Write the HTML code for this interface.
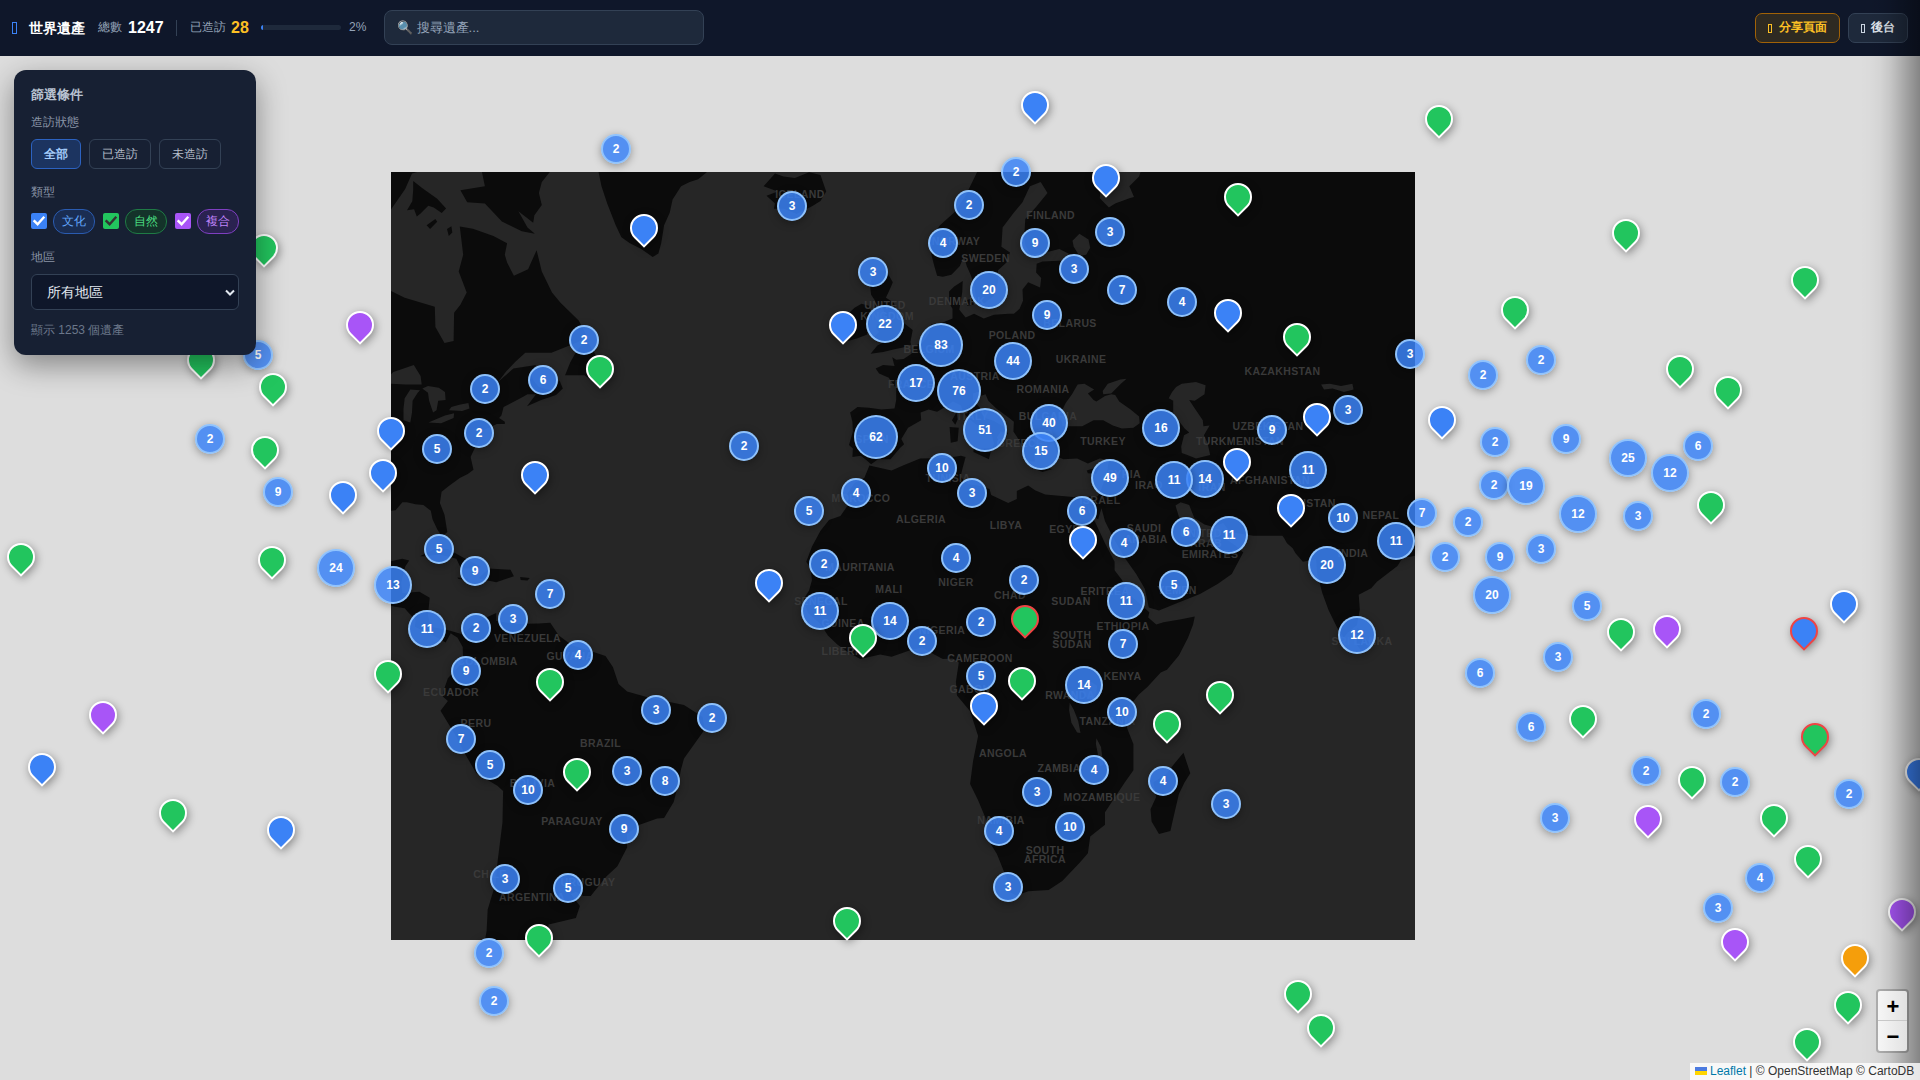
<!DOCTYPE html><html><head><meta charset="utf-8"><style>
*{box-sizing:border-box;margin:0;padding:0}
html,body{width:1920px;height:1080px;overflow:hidden;background:#dddddd;font-family:"Liberation Sans",sans-serif}
#tiles{position:absolute;left:391px;top:172px;width:1024px;height:768px;background:#262626;overflow:hidden}
#tiles svg{position:absolute;left:0;top:0}
.lb{position:absolute;transform:translate(-50%,-50%);font-size:10.5px;font-weight:bold;letter-spacing:.4px;color:#3a3a3a;white-space:nowrap;line-height:1}
.cl{position:absolute;border-radius:50%;background:rgba(59,130,246,.85);border:2.5px solid rgba(147,197,253,.95);color:#fff;font-weight:bold;font-size:12px;display:flex;align-items:center;justify-content:center;box-shadow:0 2px 8px rgba(0,0,0,.35)}
.pin{position:absolute;width:28px;height:28px;border-radius:50% 50% 50% 0;transform:rotate(-45deg);border:2.5px solid #fff;box-shadow:-.7px 2.8px 8px rgba(0,0,0,.38)}
#hdr{position:absolute;left:0;top:0;width:1920px;height:56px;background:#0f172a}
#hdr .t{position:absolute;white-space:nowrap;line-height:1}
#shade{position:absolute;right:0;top:0;width:60px;height:1080px;background:linear-gradient(to right,rgba(0,0,0,0) 0%,rgba(0,0,0,.01) 16.7%,rgba(0,0,0,.04) 33.3%,rgba(0,0,0,.10) 50%,rgba(0,0,0,.20) 66.7%,rgba(0,0,0,.30) 83.3%,rgba(0,0,0,.40) 100%)}
#panel{position:absolute;left:14px;top:70px;width:242px;height:284.5px;background:#172033;border-radius:12px;box-shadow:0 10px 30px rgba(0,0,0,.4)}
#panel .t{position:absolute;white-space:nowrap;line-height:1}
.btn{position:absolute;border:1px solid #334155;border-radius:6px;color:#cbd5e1;font-size:13px;display:flex;align-items:center;justify-content:center}
.pill{position:absolute;border-radius:12px;font-size:12px;font-weight:normal;display:flex;align-items:center;justify-content:center}
.cb{position:absolute;width:16px;height:16px;border-radius:2px}
#zoom{position:absolute;left:1876px;top:989px;width:33px;height:63.5px;background:linear-gradient(to right,#f6f6f6,#e2e2e2);border:2px solid rgba(0,0,0,.2);border-radius:4px;background-clip:padding-box}
#attr{position:absolute;left:1690px;top:1063px;width:230px;height:17px;background:rgba(255,255,255,.8);font-size:12px;color:#333;line-height:17px;padding-left:5px;white-space:nowrap}
</style></head><body><div id="tiles"><svg width="1024" height="768" viewBox="0 0 1024 768"><path fill="#0b0b0b" d="M-170.7 -53.7L34.1 -53.7L48.4 -37.4L48.4 -7.0L21.0 1.6L14.2 16.9L-4.0 43.2L-11.4 49.4L-22.8 70.0L-23.9 96.2L-14.2 112.3L13.7 125.7L43.8 134.8L44.4 155.1L53.5 170.9L62.6 169.1L63.1 140.7L69.4 132.8L75.7 120.6L67.7 99.4L72.2 82.7L68.8 54.4L81.9 56.8L102.4 64.1L116.1 71.2L113.8 82.7L116.1 90.6L122.9 103.8L137.1 97.2L145.6 78.2L150.8 99.4L161.0 120.6L169.5 130.8L187.7 148.5L195.1 162.6L187.2 170.0L160.4 180.8L134.3 180.8L124.6 189.6L115.5 199.1L107.0 210.0L122.3 196.5L145.1 193.1L139.4 199.9L142.2 208.3L147.9 215.0L162.1 219.1L168.4 208.3L171.8 216.6L165.0 223.1L150.2 227.9L136.0 234.3L145.1 222.3L136.5 222.3L130.8 225.5L112.6 235.1L110.4 243.6L108.1 246.0L113.8 249.8L113.8 252.1L105.8 252.1L91.0 258.9L85.9 271.4L79.6 285.1L82.5 297.8L76.8 302.0L68.8 306.1L57.5 314.3L50.6 319.7L48.9 331.0L53.5 342.7L56.3 360.0L51.2 364.4L46.6 358.1L41.5 347.3L39.8 338.8L32.4 333.0L24.5 332.3L15.9 330.3L11.4 330.3L4.6 338.2L0.0 338.8L-11.4 335.6L-27.3 337.5L-41.0 347.9L-41.0 359.4L-44.4 382.4L-34.7 400.7L-25.0 407.3L-2.8 397.0L-2.3 389.8L11.4 386.7L18.2 388.5L14.2 394.6L10.2 410.9L11.4 421.0L28.4 419.8L38.7 425.7L37.0 443.2L39.8 454.8L57.5 458.3L71.1 462.3L82.5 452.5L89.9 447.9L105.2 440.9L105.2 449.0L125.2 451.9L147.9 451.4L159.3 450.8L167.8 463.5L180.9 473.2L198.0 478.4L214.5 484.1L221.9 494.9L227.6 512.0L236.1 519.4L260.0 526.2L293.0 533.1L311.8 545.1L313.5 557.7L293.0 586.6L290.1 597.1L286.2 616.1L282.7 630.0L273.1 645.9L266.2 646.5L248.6 652.7L236.1 662.1L236.1 675.5L226.4 694.3L215.6 704.3L199.7 724.1L192.3 724.1L184.9 720.0L179.8 722.0L188.9 733.9L184.9 746.0L157.6 752.6L156.4 760.7L147.9 768.2L142.2 799.3L85.3 799.3L93.9 768.2L95.6 759.2L96.7 737.4L104.7 711.1L106.4 691.0L111.5 650.2L112.1 619.1L106.4 613.7L85.3 601.3L73.4 580.8L64.9 564.0L49.5 538.8L56.9 529.1L51.8 524.5L52.9 517.7L56.9 506.3L72.2 489.8L71.7 474.9L66.6 465.8L59.7 461.2L54.6 470.4L45.5 465.2L23.9 454.8L24.5 447.9L17.1 440.3L13.7 436.2L2.8 434.5L-8.5 431.6L-56.9 431.6L-170.7 431.6ZM0.0 -53.7L159.3 -53.7L162.1 -4.1L150.8 10.0L147.9 21.0L150.8 32.9L143.4 43.2L142.2 50.7L127.4 39.3L136.5 55.6L143.9 61.7L130.8 59.3L110.9 49.4L93.9 31.6L76.2 30.3L69.4 18.3L93.9 14.2L91.0 0.2L99.6 -14.4L79.6 -21.9L0.0 -21.9ZM199.1 -53.7L207.6 0.2L210.5 14.2L216.2 31.6L224.7 53.2L230.4 65.3L238.9 71.2L250.3 77.0L261.7 85.0L267.4 81.6L270.2 71.2L273.1 53.2L278.8 40.6L281.6 27.6L290.1 14.2L298.7 10.0L307.2 7.3L315.7 0.2L341.3 -21.9L341.3 -53.7ZM384.0 1.6L372.6 14.2L386.8 19.6L375.5 23.7L384.0 31.6L382.9 36.8L392.5 36.8L405.6 41.9L421.0 34.2L429.5 29.0L435.2 19.6L429.5 3.0L418.1 0.2L403.9 5.9L392.5 4.4ZM483.6 98.3L494.9 98.3L501.8 110.2L500.1 114.4L494.9 125.7L502.9 130.8L505.2 139.7L512.0 145.6L513.1 151.3L521.7 158.0L519.4 170.0L520.0 172.7L512.0 175.4L503.5 177.2L492.1 179.9L479.6 181.7L486.4 173.6L494.9 169.1L487.5 167.2L481.8 166.3L488.1 159.8L485.3 157.0L485.8 152.3L494.9 151.3L494.9 145.6L492.1 136.8L483.6 138.7L484.1 128.8L480.1 122.7L479.0 112.3ZM477.9 133.8L470.5 131.8L463.6 135.8L455.1 143.6L456.2 152.3L452.3 163.6L456.8 169.1L466.5 166.3L476.2 162.6L477.9 150.4L480.7 140.7ZM586.0 -53.7L586.0 0.2L574.6 23.7L563.2 40.6L549.0 53.2L540.4 65.3L540.4 82.7L543.3 93.9L546.1 103.8L551.8 104.8L560.4 102.7L568.9 93.9L572.9 83.9L575.7 93.9L579.1 101.6L583.1 112.3L585.4 129.8L592.8 131.8L603.0 123.7L607.0 110.2L607.0 98.3L615.5 90.6L619.0 80.5L610.4 74.7L611.6 55.6L622.9 40.6L631.5 30.3L638.9 14.2L649.7 10.0L656.5 21.0L645.7 34.2L634.3 46.9L633.2 65.3L634.3 73.5L640.0 82.7L654.2 80.5L668.4 77.0L679.8 82.7L674.1 88.4L651.4 89.5L645.7 91.7L645.1 100.5L650.2 105.9L649.1 115.4L637.2 110.2L631.5 117.5L632.0 128.8L628.6 136.8L622.9 141.7L617.8 141.7L603.0 142.7L592.8 146.5L583.1 141.7L574.6 145.6L568.3 137.8L571.2 120.6L571.7 109.1L563.2 114.4L558.1 119.6L558.1 130.8L561.5 136.8L561.5 146.5L551.8 150.4L540.4 152.3L538.2 160.8L531.9 170.0L526.2 172.7L521.1 175.4L520.5 181.7L512.6 187.0L505.2 187.8L501.2 185.2L503.5 193.9L492.1 193.1L484.7 196.5L488.1 201.6L497.8 205.8L505.2 216.6L505.2 227.9L503.5 236.6L490.4 237.4L477.9 235.8L466.5 235.1L459.1 240.5L461.4 249.8L461.9 259.6L458.0 272.9L461.9 276.5L461.4 285.1L469.9 283.7L476.2 288.7L480.1 292.2L487.0 287.3L499.5 287.3L509.2 275.8L513.1 272.2L510.3 267.0L517.1 255.8L530.2 248.3L529.6 240.5L537.6 237.4L546.1 239.8L554.1 235.1L562.1 229.5L570.0 233.5L572.3 241.3L581.4 249.8L591.6 257.4L600.7 262.6L603.0 271.4L600.7 278.0L603.6 278.0L606.4 274.4L609.3 270.7L605.9 265.6L609.8 259.6L617.2 262.6L614.4 255.8L603.0 249.0L594.5 246.0L588.8 235.8L582.0 227.9L582.0 221.5L589.9 219.1L589.4 223.9L594.5 222.3L597.3 228.7L605.3 236.6L617.2 245.2L622.9 249.8L622.4 259.6L626.9 266.3L632.0 275.8L634.9 286.6L640.0 289.4L644.0 289.4L642.8 281.6L648.5 278.0L641.7 268.5L644.6 264.1L640.6 259.6L648.5 257.4L659.9 257.4L662.2 262.6L661.0 267.0L664.5 275.1L667.3 285.1L672.4 287.3L686.1 286.6L696.9 291.5L708.8 286.6L717.9 288.0L716.2 299.2L714.0 306.1L711.7 312.9L711.1 314.3L709.4 319.7L706.6 324.4L710.5 336.2L714.0 349.2L723.6 368.2L734.4 386.7L745.2 401.9L753.8 416.8L757.8 435.6L768.0 438.6L785.1 431.6L809.0 422.1L826.6 412.1L840.8 401.9L852.2 380.6L844.8 373.8L832.9 365.7L832.3 356.8L827.7 361.9L821.5 369.4L806.7 371.3L803.3 367.5L805.5 363.2L805.5 358.1L802.1 358.7L797.6 361.9L796.4 355.6L787.9 344.7L784.5 333.6L789.6 330.3L798.2 333.0L803.3 346.0L813.5 352.4L822.6 354.9L832.3 351.1L838.5 360.0L862.4 363.8L891.4 363.8L893.2 366.3L896.0 371.3L901.7 376.3L904.5 381.2L911.9 389.8L925.0 387.3L926.2 401.9L931.3 421.0L937.5 438.0L946.1 455.4L952.9 465.8L956.9 460.6L966.0 453.1L968.8 437.4L967.7 422.7L980.2 416.2L985.9 409.7L1006.4 394.0L1012.1 384.9L1018.3 384.9L1024.0 383.7L1052.4 383.7L1052.4 -53.7ZM478.4 293.6L500.6 298.5L512.0 293.6L529.1 286.6L555.8 285.9L570.0 283.7L574.6 285.1L571.7 295.7L569.5 304.7L577.4 312.3L587.1 313.6L598.5 317.0L600.2 323.0L617.2 331.0L625.8 327.0L625.8 319.0L637.2 313.6L644.0 318.3L654.2 322.4L682.1 325.0L695.8 324.4L706.6 324.4L710.5 336.2L707.1 347.3L699.7 342.7L697.5 333.6L697.5 339.5L704.3 350.5L714.0 371.3L723.6 389.8L723.6 398.3L731.0 407.9L737.8 422.1L749.2 432.1L758.3 440.3L757.2 445.6L765.2 452.5L772.6 450.2L790.2 447.3L803.8 444.4L802.1 452.5L797.0 465.8L787.9 483.5L776.0 497.8L769.7 500.6L756.6 514.8L748.1 522.2L737.8 534.8L733.9 549.1L736.7 557.7L742.4 572.1L742.4 598.3L733.9 610.2L714.0 640.3L714.0 652.7L699.2 664.6L696.9 681.3L688.4 691.0L671.3 709.0L657.6 717.9L637.2 719.3L625.8 723.4L616.7 719.3L615.5 705.7L605.9 681.9L597.9 669.1L594.5 645.9L587.1 628.2L579.1 611.9L582.0 589.5L587.1 564.0L581.4 546.2L579.1 539.3L566.0 523.4L564.9 509.7L567.8 490.4L561.5 486.4L551.8 486.9L543.3 482.4L531.3 475.5L520.5 477.8L500.6 484.7L489.2 482.4L469.3 486.9L458.0 480.7L446.6 472.7L436.9 463.5L429.5 451.9L417.0 440.9L412.4 427.4L418.1 418.6L421.0 407.9L419.3 395.8L415.3 389.8L421.0 374.4L429.5 358.7L438.0 347.9L449.4 344.0L456.2 334.3L457.4 330.3L456.2 321.7L463.6 310.9L473.3 306.1ZM792.5 580.8L799.3 601.3L793.6 610.2L787.9 622.1L782.2 646.5L779.4 659.0L768.0 662.1L760.6 649.6L759.5 637.3L765.2 625.1L762.3 610.2L774.8 602.5L785.1 589.5ZM966.5 456.0L968.8 457.7L977.9 470.4L975.6 476.7L970.0 478.4L966.0 473.2L966.0 463.5ZM582.5 277.2L600.7 275.8L597.9 287.3L582.5 280.1ZM558.6 255.1L567.8 255.8L566.6 269.2L559.8 270.7ZM565.5 240.5L566.6 247.5L564.3 252.8L560.9 248.3ZM645.7 295.0L661.6 297.1L651.4 299.9L645.7 297.8ZM695.8 298.5L708.8 294.3L705.4 302.0L696.9 301.3ZM29.0 384.3L45.5 376.3L56.9 376.9L71.1 384.9L89.9 394.6L88.2 396.4L70.0 396.4L65.4 386.7L48.4 382.4L34.1 384.3ZM88.2 405.5L97.8 396.4L119.5 397.7L122.9 404.3L105.2 410.3L88.7 406.7ZM66.6 405.5L78.5 406.7L75.1 408.5L67.1 406.7ZM129.1 404.9L138.8 406.1L136.5 408.5L129.7 407.9ZM195.7 168.2L207.1 187.0L212.2 201.6L212.8 210.8L207.1 211.7L199.1 207.5L193.4 203.3L174.1 203.3L179.2 190.5L186.6 177.2ZM574.0 128.8L583.7 125.2L582.5 132.8L576.3 133.8ZM22.2 8.9L31.1 16.0L46.2 26.7L55.1 36.4L50.7 40.9L42.7 35.6L37.3 33.8L29.3 41.8L25.8 44.4L23.1 37.3L16.0 38.2L21.3 29.3L22.2 17.8ZM35.6 53.3L44.4 47.1L46.2 49.8L39.1 56.9ZM56.0 56.9L60.4 54.2L61.3 60.4L57.8 64.0Z"/><path fill="#262626" d="M681.5 68.8L688.4 61.7L697.5 67.6L699.2 75.8L695.2 82.7L688.4 83.9L685.5 79.3L682.7 74.7ZM711.1 48.2L716.8 53.2L719.1 65.3L714.5 72.4L711.1 68.8L707.7 61.7L707.1 54.4ZM790.8 211.7L805.0 210.0L814.6 213.3L813.5 222.3L803.8 228.7L798.2 227.9L803.3 235.8L811.8 248.3L812.4 254.3L818.6 253.6L812.9 263.3L816.4 270.7L819.2 283.0L805.0 286.6L796.4 283.0L790.8 280.9L790.2 274.4L793.0 263.3L798.2 260.4L793.6 256.6L788.5 249.8L782.2 240.5L782.2 228.7L777.7 226.3L781.1 219.9L785.1 215.0ZM671.3 254.3L677.0 254.3L691.2 254.3L702.6 248.3L712.2 248.3L721.9 253.6L731.0 256.6L742.4 255.8L748.7 251.3L748.1 244.4L739.6 237.4L728.2 229.5L724.2 223.1L720.2 222.3L714.0 223.9L705.4 229.5L702.6 227.9L696.9 221.5L703.1 217.4L693.5 211.7L686.6 212.5L681.0 222.3L674.7 231.1L670.7 239.0L669.0 244.4L671.3 251.3ZM712.2 222.3L720.2 221.5L729.9 211.7L735.6 206.7L729.3 207.5L716.8 211.7L711.7 219.1ZM696.9 -4.1L702.6 0.2L710.0 8.6L708.8 26.3L717.9 35.5L724.2 31.6L738.4 26.3L743.0 25.0L738.4 14.2L748.1 4.4L750.9 -4.1ZM-11.9 210.0L0.0 211.7L14.2 212.5L30.7 212.5L29.6 204.1L22.8 193.1L9.7 197.4L2.3 199.9L-2.8 205.0ZM12.5 248.3L19.3 250.5L21.0 240.5L21.6 228.7L26.7 220.7L29.0 218.2L19.3 217.4L13.7 226.3L12.5 236.6ZM31.3 216.6L37.0 220.7L38.1 228.7L42.1 240.5L45.5 238.2L47.2 228.7L54.6 227.9L54.0 219.9L47.8 215.8L37.0 214.1ZM37.5 250.5L50.1 251.3L62.6 246.0L63.1 241.3L54.0 243.6L42.7 248.3ZM58.0 238.2L71.1 239.0L78.5 236.6L77.4 231.1L68.3 232.7L60.3 235.1ZM930.1 212.5L938.7 211.7L950.0 214.1L961.4 211.7L962.6 217.4L952.9 219.9L941.5 216.6L933.0 217.4ZM692.9 513.7L699.7 509.7L706.0 513.7L705.4 520.5L702.6 527.4L696.9 526.8L691.8 520.5ZM678.7 530.8L682.7 537.6L687.2 549.1L689.5 561.1L686.1 560.5L680.4 550.8L678.1 538.2ZM705.4 566.3L710.0 575.0L712.2 592.4L708.8 594.2L706.6 580.8L704.9 572.1Z"/></svg><div class="lb" style="left:409.0px;top:22.0px">ICELAND</div><div class="lb" style="left:565.0px;top:69.0px">NORWAY</div><div class="lb" style="left:594.5px;top:86.4px">SWEDEN</div><div class="lb" style="left:659.6px;top:43.4px">FINLAND</div><div class="lb" style="left:566.0px;top:129.0px">DENMARK</div><div class="lb" style="left:494.0px;top:133.0px">UNITED</div><div class="lb" style="left:496.0px;top:144.0px">KINGDOM</div><div class="lb" style="left:538.0px;top:177.0px">BELGIUM</div><div class="lb" style="left:621.0px;top:163.0px">POLAND</div><div class="lb" style="left:679.0px;top:151.0px">BELARUS</div><div class="lb" style="left:690.0px;top:187.0px">UKRAINE</div><div class="lb" style="left:520.0px;top:212.0px">FRANCE</div><div class="lb" style="left:584.0px;top:204.0px">AUSTRIA</div><div class="lb" style="left:652.0px;top:217.0px">ROMANIA</div><div class="lb" style="left:481.0px;top:267.0px">SPAIN</div><div class="lb" style="left:582.0px;top:244.0px">ITALY</div><div class="lb" style="left:657.0px;top:244.0px">BULGARIA</div><div class="lb" style="left:629.0px;top:271.0px">GREECE</div><div class="lb" style="left:712.0px;top:269.0px">TURKEY</div><div class="lb" style="left:891.5px;top:199.0px">KAZAKHSTAN</div><div class="lb" style="left:877.0px;top:254.0px">UZBEKISTAN</div><div class="lb" style="left:849.0px;top:268.5px">TURKMENISTAN</div><div class="lb" style="left:879.0px;top:308.0px">AFGHANISTAN</div><div class="lb" style="left:917.0px;top:331.0px">PAKISTAN</div><div class="lb" style="left:990.0px;top:343.0px">NEPAL</div><div class="lb" style="left:962.0px;top:381.0px">INDIA</div><div class="lb" style="left:971.0px;top:469.0px">SRI LANKA</div><div class="lb" style="left:758.0px;top:313.0px">IRAQ</div><div class="lb" style="left:821.0px;top:315.0px">IRAN</div><div class="lb" style="left:733.0px;top:302.0px">SYRIA</div><div class="lb" style="left:709.0px;top:328.0px">ISRAEL</div><div class="lb" style="left:677.0px;top:357.0px">EGYPT</div><div class="lb" style="left:615.0px;top:353.0px">LIBYA</div><div class="lb" style="left:557.0px;top:306.0px">TUNISIA</div><div class="lb" style="left:530.0px;top:346.5px">ALGERIA</div><div class="lb" style="left:470.0px;top:325.5px">MOROCCO</div><div class="lb" style="left:469.0px;top:394.5px">MAURITANIA</div><div class="lb" style="left:498.0px;top:417.0px">MALI</div><div class="lb" style="left:565.0px;top:409.5px">NIGER</div><div class="lb" style="left:619.0px;top:422.5px">CHAD</div><div class="lb" style="left:680.0px;top:428.5px">SUDAN</div><div class="lb" style="left:714.0px;top:419.0px">ERITREA</div><div class="lb" style="left:786.0px;top:418.0px">YEMEN</div><div class="lb" style="left:753.0px;top:355.5px">SAUDI</div><div class="lb" style="left:755.0px;top:367.0px">ARABIA</div><div class="lb" style="left:810.0px;top:360.5px">UNITED</div><div class="lb" style="left:815.0px;top:371.0px">ARAB</div><div class="lb" style="left:819.0px;top:382.0px">EMIRATES</div><div class="lb" style="left:732.0px;top:454.0px">ETHIOPIA</div><div class="lb" style="left:681.0px;top:462.5px">SOUTH</div><div class="lb" style="left:681.0px;top:472.0px">SUDAN</div><div class="lb" style="left:430.0px;top:429.0px">SENEGAL</div><div class="lb" style="left:452.0px;top:450.5px">GUINEA</div><div class="lb" style="left:453.0px;top:479.0px">LIBERIA</div><div class="lb" style="left:551.0px;top:457.5px">NIGERIA</div><div class="lb" style="left:589.0px;top:486.0px">CAMEROON</div><div class="lb" style="left:579.0px;top:517.0px">GABON</div><div class="lb" style="left:731.5px;top:504.0px">KENYA</div><div class="lb" style="left:679.0px;top:523.0px">RWANDA</div><div class="lb" style="left:716.5px;top:548.5px">TANZANIA</div><div class="lb" style="left:612.0px;top:580.5px">ANGOLA</div><div class="lb" style="left:668.0px;top:595.5px">ZAMBIA</div><div class="lb" style="left:711.0px;top:625.0px">MOZAMBIQUE</div><div class="lb" style="left:610.0px;top:647.5px">NAMIBIA</div><div class="lb" style="left:654.0px;top:678.0px">SOUTH</div><div class="lb" style="left:654.0px;top:687.0px">AFRICA</div><div class="lb" style="left:136.5px;top:466.0px">VENEZUELA</div><div class="lb" style="left:96.5px;top:489.0px">COLOMBIA</div><div class="lb" style="left:179.0px;top:484.0px">GUYANA</div><div class="lb" style="left:60.0px;top:520.0px">ECUADOR</div><div class="lb" style="left:85.0px;top:551.0px">PERU</div><div class="lb" style="left:209.5px;top:570.5px">BRAZIL</div><div class="lb" style="left:141.5px;top:610.5px">BOLIVIA</div><div class="lb" style="left:181.0px;top:648.5px">PARAGUAY</div><div class="lb" style="left:99.0px;top:702.0px">CHILE</div><div class="lb" style="left:141.0px;top:725.0px">ARGENTINA</div><div class="lb" style="left:197.0px;top:710.0px">URUGUAY</div></div><div class="pin" style="left:1021.0px;top:90.9px;background:#3b82f6"></div><div class="pin" style="left:1424.5px;top:105.2px;background:#22c55e"></div><div class="cl" style="left:601px;top:134px;width:30px;height:30px">2</div><div class="cl" style="left:1001px;top:157px;width:30px;height:30px">2</div><div class="pin" style="left:1092.2px;top:163.9px;background:#3b82f6"></div><div class="cl" style="left:954px;top:190px;width:30px;height:30px">2</div><div class="cl" style="left:777px;top:191px;width:30px;height:30px">3</div><div class="pin" style="left:1224.0px;top:182.7px;background:#22c55e"></div><div class="cl" style="left:1095px;top:217px;width:30px;height:30px">3</div><div class="cl" style="left:928px;top:228px;width:30px;height:30px">4</div><div class="cl" style="left:1020px;top:228px;width:30px;height:30px">9</div><div class="pin" style="left:630.0px;top:213.9px;background:#3b82f6"></div><div class="pin" style="left:1611.5px;top:218.9px;background:#22c55e"></div><div class="pin" style="left:249.8px;top:233.9px;background:#22c55e"></div><div class="cl" style="left:1059px;top:254px;width:30px;height:30px">3</div><div class="cl" style="left:858px;top:257px;width:30px;height:30px">3</div><div class="cl" style="left:970px;top:271px;width:38px;height:38px">20</div><div class="cl" style="left:1107px;top:275px;width:30px;height:30px">7</div><div class="pin" style="left:1791.0px;top:266.4px;background:#22c55e"></div><div class="cl" style="left:1167px;top:287px;width:30px;height:30px">4</div><div class="cl" style="left:1032px;top:300px;width:30px;height:30px">9</div><div class="cl" style="left:866px;top:305px;width:38px;height:38px">22</div><div class="pin" style="left:1501.0px;top:296.4px;background:#22c55e"></div><div class="pin" style="left:1214.0px;top:298.9px;background:#3b82f6"></div><div class="cl" style="left:569px;top:325px;width:30px;height:30px">2</div><div class="pin" style="left:346.0px;top:310.7px;background:#a855f7"></div><div class="cl" style="left:919px;top:323px;width:44px;height:44px">83</div><div class="pin" style="left:829.0px;top:311.4px;background:#3b82f6"></div><div class="cl" style="left:1395px;top:339px;width:30px;height:30px">3</div><div class="cl" style="left:243px;top:340px;width:30px;height:30px">5</div><div class="pin" style="left:1283.0px;top:323.2px;background:#22c55e"></div><div class="cl" style="left:1526px;top:345px;width:30px;height:30px">2</div><div class="cl" style="left:994px;top:342px;width:38px;height:38px">44</div><div class="cl" style="left:1468px;top:360px;width:30px;height:30px">2</div><div class="cl" style="left:528px;top:365px;width:30px;height:30px">6</div><div class="pin" style="left:187.2px;top:346.4px;background:#22c55e"></div><div class="cl" style="left:897px;top:364px;width:38px;height:38px">17</div><div class="pin" style="left:1666.0px;top:354.7px;background:#22c55e"></div><div class="cl" style="left:470px;top:374px;width:30px;height:30px">2</div><div class="pin" style="left:586.0px;top:355.2px;background:#22c55e"></div><div class="cl" style="left:937px;top:369px;width:44px;height:44px">76</div><div class="pin" style="left:259.0px;top:373.4px;background:#22c55e"></div><div class="cl" style="left:1333px;top:395px;width:30px;height:30px">3</div><div class="pin" style="left:1714.0px;top:376.4px;background:#22c55e"></div><div class="cl" style="left:1030px;top:404px;width:38px;height:38px">40</div><div class="cl" style="left:1142px;top:409px;width:38px;height:38px">16</div><div class="cl" style="left:963px;top:408px;width:44px;height:44px">51</div><div class="cl" style="left:1257px;top:415px;width:30px;height:30px">9</div><div class="cl" style="left:464px;top:418px;width:30px;height:30px">2</div><div class="cl" style="left:854px;top:415px;width:44px;height:44px">62</div><div class="pin" style="left:1303.0px;top:403.2px;background:#3b82f6"></div><div class="cl" style="left:195px;top:424px;width:30px;height:30px">2</div><div class="cl" style="left:1551px;top:424px;width:30px;height:30px">9</div><div class="pin" style="left:1427.5px;top:405.7px;background:#3b82f6"></div><div class="cl" style="left:1480px;top:427px;width:30px;height:30px">2</div><div class="cl" style="left:729px;top:431px;width:30px;height:30px">2</div><div class="cl" style="left:1683px;top:431px;width:30px;height:30px">6</div><div class="cl" style="left:422px;top:434px;width:30px;height:30px">5</div><div class="pin" style="left:377.2px;top:416.9px;background:#3b82f6"></div><div class="cl" style="left:1022px;top:432px;width:38px;height:38px">15</div><div class="cl" style="left:1609px;top:439px;width:38px;height:38px">25</div><div class="cl" style="left:927px;top:453px;width:30px;height:30px">10</div><div class="cl" style="left:1289px;top:451px;width:38px;height:38px">11</div><div class="pin" style="left:251.0px;top:436.4px;background:#22c55e"></div><div class="cl" style="left:1651px;top:454px;width:38px;height:38px">12</div><div class="cl" style="left:1091px;top:459px;width:38px;height:38px">49</div><div class="cl" style="left:1186px;top:460px;width:38px;height:38px">14</div><div class="cl" style="left:1155px;top:461px;width:38px;height:38px">11</div><div class="pin" style="left:1223.0px;top:448.2px;background:#3b82f6"></div><div class="cl" style="left:1479px;top:470px;width:30px;height:30px">2</div><div class="cl" style="left:1507px;top:467px;width:38px;height:38px">19</div><div class="cl" style="left:263px;top:477px;width:30px;height:30px">9</div><div class="pin" style="left:369.0px;top:458.9px;background:#3b82f6"></div><div class="cl" style="left:957px;top:478px;width:30px;height:30px">3</div><div class="cl" style="left:841px;top:478px;width:30px;height:30px">4</div><div class="pin" style="left:521.0px;top:460.7px;background:#3b82f6"></div><div class="cl" style="left:794px;top:496px;width:30px;height:30px">5</div><div class="cl" style="left:1067px;top:496px;width:30px;height:30px">6</div><div class="cl" style="left:1407px;top:498px;width:30px;height:30px">7</div><div class="cl" style="left:1559px;top:495px;width:38px;height:38px">12</div><div class="pin" style="left:329.0px;top:480.7px;background:#3b82f6"></div><div class="cl" style="left:1623px;top:501px;width:30px;height:30px">3</div><div class="cl" style="left:1328px;top:503px;width:30px;height:30px">10</div><div class="cl" style="left:1453px;top:507px;width:30px;height:30px">2</div><div class="pin" style="left:1697.2px;top:491.4px;background:#22c55e"></div><div class="pin" style="left:1277.2px;top:493.9px;background:#3b82f6"></div><div class="cl" style="left:1171px;top:517px;width:30px;height:30px">6</div><div class="cl" style="left:1210px;top:516px;width:38px;height:38px">11</div><div class="cl" style="left:1377px;top:522px;width:38px;height:38px">11</div><div class="cl" style="left:1109px;top:528px;width:30px;height:30px">4</div><div class="cl" style="left:424px;top:534px;width:30px;height:30px">5</div><div class="cl" style="left:1526px;top:534px;width:30px;height:30px">3</div><div class="cl" style="left:1430px;top:542px;width:30px;height:30px">2</div><div class="cl" style="left:1485px;top:542px;width:30px;height:30px">9</div><div class="cl" style="left:941px;top:543px;width:30px;height:30px">4</div><div class="pin" style="left:1069.0px;top:525.9px;background:#3b82f6"></div><div class="cl" style="left:809px;top:549px;width:30px;height:30px">2</div><div class="cl" style="left:1308px;top:546px;width:38px;height:38px">20</div><div class="cl" style="left:317px;top:549px;width:38px;height:38px">24</div><div class="cl" style="left:460px;top:556px;width:30px;height:30px">9</div><div class="pin" style="left:6.8px;top:542.7px;background:#22c55e"></div><div class="cl" style="left:1009px;top:565px;width:30px;height:30px">2</div><div class="pin" style="left:258.0px;top:546.4px;background:#22c55e"></div><div class="cl" style="left:374px;top:566px;width:38px;height:38px">13</div><div class="cl" style="left:1159px;top:570px;width:30px;height:30px">5</div><div class="cl" style="left:535px;top:579px;width:30px;height:30px">7</div><div class="cl" style="left:1473px;top:576px;width:38px;height:38px">20</div><div class="cl" style="left:1107px;top:582px;width:38px;height:38px">11</div><div class="pin" style="left:755.2px;top:568.9px;background:#3b82f6"></div><div class="cl" style="left:1572px;top:591px;width:30px;height:30px">5</div><div class="cl" style="left:801px;top:592px;width:38px;height:38px">11</div><div class="cl" style="left:498px;top:604px;width:30px;height:30px">3</div><div class="cl" style="left:871px;top:602px;width:38px;height:38px">14</div><div class="cl" style="left:966px;top:607px;width:30px;height:30px">2</div><div class="pin" style="left:1830.2px;top:589.7px;background:#3b82f6"></div><div class="cl" style="left:461px;top:613px;width:30px;height:30px">2</div><div class="cl" style="left:408px;top:610px;width:38px;height:38px">11</div><div class="cl" style="left:1338px;top:616px;width:38px;height:38px">12</div><div class="pin" style="left:1011.0px;top:605.2px;background:#22c55e;border:2px solid #ef4444"></div><div class="cl" style="left:907px;top:626px;width:30px;height:30px">2</div><div class="cl" style="left:1108px;top:629px;width:30px;height:30px">7</div><div class="pin" style="left:1653.0px;top:614.7px;background:#a855f7"></div><div class="pin" style="left:1789.8px;top:616.9px;background:#3b82f6;border:2px solid #ef4444"></div><div class="pin" style="left:1607.2px;top:617.7px;background:#22c55e"></div><div class="cl" style="left:563px;top:640px;width:30px;height:30px">4</div><div class="cl" style="left:1543px;top:642px;width:30px;height:30px">3</div><div class="pin" style="left:849.0px;top:623.9px;background:#22c55e"></div><div class="cl" style="left:451px;top:656px;width:30px;height:30px">9</div><div class="cl" style="left:1465px;top:658px;width:30px;height:30px">6</div><div class="cl" style="left:966px;top:661px;width:30px;height:30px">5</div><div class="cl" style="left:1065px;top:666px;width:38px;height:38px">14</div><div class="pin" style="left:374.0px;top:660.2px;background:#22c55e"></div><div class="pin" style="left:1008.0px;top:666.9px;background:#22c55e"></div><div class="pin" style="left:536.0px;top:668.4px;background:#22c55e"></div><div class="cl" style="left:641px;top:695px;width:30px;height:30px">3</div><div class="cl" style="left:1107px;top:697px;width:30px;height:30px">10</div><div class="cl" style="left:1691px;top:699px;width:30px;height:30px">2</div><div class="pin" style="left:1206.0px;top:680.9px;background:#22c55e"></div><div class="cl" style="left:697px;top:703px;width:30px;height:30px">2</div><div class="pin" style="left:970.2px;top:691.9px;background:#3b82f6"></div><div class="cl" style="left:1516px;top:712px;width:30px;height:30px">6</div><div class="pin" style="left:89.0px;top:701.4px;background:#a855f7"></div><div class="pin" style="left:1569.2px;top:704.7px;background:#22c55e"></div><div class="cl" style="left:446px;top:724px;width:30px;height:30px">7</div><div class="pin" style="left:1153.0px;top:709.7px;background:#22c55e"></div><div class="pin" style="left:1801.0px;top:722.7px;background:#22c55e;border:2px solid #ef4444"></div><div class="cl" style="left:475px;top:750px;width:30px;height:30px">5</div><div class="cl" style="left:1079px;top:755px;width:30px;height:30px">4</div><div class="cl" style="left:612px;top:756px;width:30px;height:30px">3</div><div class="cl" style="left:1631px;top:756px;width:30px;height:30px">2</div><div class="cl" style="left:650px;top:766px;width:30px;height:30px">8</div><div class="cl" style="left:1148px;top:766px;width:30px;height:30px">4</div><div class="cl" style="left:1720px;top:767px;width:30px;height:30px">2</div><div class="pin" style="left:28.0px;top:753.2px;background:#3b82f6"></div><div class="cl" style="left:513px;top:775px;width:30px;height:30px">10</div><div class="pin" style="left:563.0px;top:757.7px;background:#22c55e"></div><div class="pin" style="left:1905.0px;top:757.7px;background:#3b82f6"></div><div class="cl" style="left:1022px;top:777px;width:30px;height:30px">3</div><div class="cl" style="left:1834px;top:779px;width:30px;height:30px">2</div><div class="pin" style="left:1678.0px;top:766.4px;background:#22c55e"></div><div class="cl" style="left:1211px;top:789px;width:30px;height:30px">3</div><div class="cl" style="left:1540px;top:803px;width:30px;height:30px">3</div><div class="cl" style="left:1055px;top:812px;width:30px;height:30px">10</div><div class="cl" style="left:609px;top:814px;width:30px;height:30px">9</div><div class="cl" style="left:984px;top:816px;width:30px;height:30px">4</div><div class="pin" style="left:159.0px;top:798.9px;background:#22c55e"></div><div class="pin" style="left:1760.2px;top:803.9px;background:#22c55e"></div><div class="pin" style="left:1634.0px;top:805.2px;background:#a855f7"></div><div class="pin" style="left:267.2px;top:815.7px;background:#3b82f6"></div><div class="cl" style="left:1745px;top:863px;width:30px;height:30px">4</div><div class="pin" style="left:1794.0px;top:844.7px;background:#22c55e"></div><div class="cl" style="left:490px;top:864px;width:30px;height:30px">3</div><div class="cl" style="left:993px;top:872px;width:30px;height:30px">3</div><div class="cl" style="left:553px;top:873px;width:30px;height:30px">5</div><div class="cl" style="left:1703px;top:893px;width:30px;height:30px">3</div><div class="pin" style="left:1888.0px;top:898.2px;background:#a855f7"></div><div class="pin" style="left:832.8px;top:906.9px;background:#22c55e"></div><div class="cl" style="left:474px;top:938px;width:30px;height:30px">2</div><div class="pin" style="left:524.8px;top:923.8px;background:#22c55e"></div><div class="pin" style="left:1721.0px;top:927.7px;background:#a855f7"></div><div class="pin" style="left:1841.0px;top:943.9px;background:#f59e0b"></div><div class="cl" style="left:479px;top:986px;width:30px;height:30px">2</div><div class="pin" style="left:1284.0px;top:979.7px;background:#22c55e"></div><div class="pin" style="left:1834.0px;top:991.4px;background:#22c55e"></div><div class="pin" style="left:1307.2px;top:1013.9px;background:#22c55e"></div><div class="pin" style="left:1793.0px;top:1027.7px;background:#22c55e"></div><div id="panel">
<div class="t" style="left:17px;top:18px;font-size:13px;font-weight:bold;color:#b8c2d0">篩選條件</div>
<div class="t" style="left:17px;top:46px;font-size:12px;color:#8a95a7">造訪狀態</div>
<div class="btn" style="left:17px;top:69px;width:50px;height:30px;background:#1c3460;border-color:#2c62c0;color:#a5cdfb;font-size:12px;font-weight:bold">全部</div>
<div class="btn" style="left:75px;top:69px;width:62px;height:30px;font-size:12px;color:#b4bdca">已造訪</div>
<div class="btn" style="left:145px;top:69px;width:62px;height:30px;font-size:12px;color:#b4bdca">未造訪</div>
<div class="t" style="left:17px;top:116px;font-size:12px;color:#8a95a7">類型</div>
<div class="cb" style="left:17px;top:143px;background:#3b82f6"><svg width="16" height="16" viewBox="0 0 16 16" style="position:absolute;left:0;top:0"><path d="M3.5 8.2 L6.6 11.2 L12.5 4.6" fill="none" stroke="#fff" stroke-width="2.4" stroke-linecap="square"/></svg></div>
<div class="pill" style="left:39px;top:139px;width:42px;height:25px;background:#1a2d52;border:1px solid #2a5bb0;color:#60a5fa">文化</div>
<div class="cb" style="left:89px;top:143px;background:#22c55e"><svg width="16" height="16" viewBox="0 0 16 16" style="position:absolute;left:0;top:0"><path d="M3.5 8.2 L6.6 11.2 L12.5 4.6" fill="none" stroke="#333" stroke-width="2.4" stroke-linecap="square"/></svg></div>
<div class="pill" style="left:111px;top:139px;width:42px;height:25px;background:#14332a;border:1px solid #1f7a45;color:#4ade80">自然</div>
<div class="cb" style="left:161px;top:143px;background:#a855f7"><svg width="16" height="16" viewBox="0 0 16 16" style="position:absolute;left:0;top:0"><path d="M3.5 8.2 L6.6 11.2 L12.5 4.6" fill="none" stroke="#fff" stroke-width="2.4" stroke-linecap="square"/></svg></div>
<div class="pill" style="left:183px;top:139px;width:42px;height:25px;background:#2a2250;border:1px solid #7e3fc0;color:#c084fc">複合</div>
<div class="t" style="left:17px;top:181px;font-size:12px;color:#8a95a7">地區</div>
<div class="t" style="left:17px;top:204px;width:208px;height:36px;border:1px solid #334155;border-radius:6px;background:#0f172a"></div>
<div class="t" style="left:33px;top:215px;font-size:14px;color:#e2e8f0">所有地區</div>
<svg class="t" width="12" height="8" viewBox="0 0 12 8" style="left:210px;top:219px"><path d="M2 1.5 L6 5.5 L10 1.5" fill="none" stroke="#e2e8f0" stroke-width="2"/></svg>
<div class="t" style="left:17px;top:253.5px;font-size:12px;color:#6b778a">顯示 1253 個遺產</div>
</div><div id="hdr">
<div class="t" style="left:12px;top:22px;width:5px;height:12px;border:1px solid #3b82f6"></div>
<div class="t" style="left:29px;top:21px;font-size:14px;font-weight:bold;color:#fff">世界遺產</div>
<div class="t" style="left:98px;top:21px;font-size:12px;color:#94a3b8">總數</div>
<div class="t" style="left:128px;top:20px;font-size:16px;font-weight:bold;color:#fff">1247</div>
<div class="t" style="left:176px;top:20px;width:1px;height:16px;background:#334155"></div>
<div class="t" style="left:190px;top:21px;font-size:12px;color:#94a3b8">已造訪</div>
<div class="t" style="left:231px;top:20px;font-size:16px;font-weight:bold;color:#fbbf24">28</div>
<div class="t" style="left:261px;top:25px;width:80px;height:5px;border-radius:3px;background:#1e293b;overflow:hidden"><div style="width:2px;height:5px;background:#3b82f6"></div></div>
<div class="t" style="left:349px;top:21px;font-size:12px;color:#94a3b8">2%</div>
<div class="t" style="left:384px;top:10px;width:320px;height:35px;border:1px solid #334155;border-radius:8px;background:#1e293b"></div>
<div class="t" style="left:397px;top:21px;font-size:13px;color:#94a3b8">🔍 搜尋遺產...</div>
<div class="t" style="left:1755px;top:13px;width:85px;height:30px;border:1px solid #a16207;border-radius:7px;background:#2e2a22"></div>
<div class="t" style="left:1768px;top:24px;width:4px;height:9px;border:1px solid #fbbf24"></div>
<div class="t" style="left:1779px;top:21px;font-size:12px;font-weight:bold;color:#fbbf24">分享頁面</div>
<div class="t" style="left:1848px;top:13px;width:60px;height:30px;border:1px solid #334155;border-radius:7px;background:#1e293b"></div>
<div class="t" style="left:1861px;top:24px;width:4px;height:9px;border:1px solid #cbd5e1"></div>
<div class="t" style="left:1871px;top:21px;font-size:12px;font-weight:bold;color:#e2e8f0">後台</div>
</div><div id="shade"></div><div id="zoom"><div style="height:30px;border-bottom:1px solid #c8c8c8;font:bold 22px/31px 'Liberation Sans',sans-serif;text-align:center;color:#000;padding-left:1px">+</div><div style="height:30px;font:bold 22px/31px 'Liberation Sans',sans-serif;text-align:center;color:#000;padding-left:1px">−</div></div>
<div id="attr"><span style="display:inline-block;width:12px;height:8px;background:linear-gradient(#4c7be0 50%,#ffd500 50%);margin-right:3px;vertical-align:0"></span><span style="color:#0078a8">Leaflet</span> | © OpenStreetMap © CartoDB</div></body></html>
